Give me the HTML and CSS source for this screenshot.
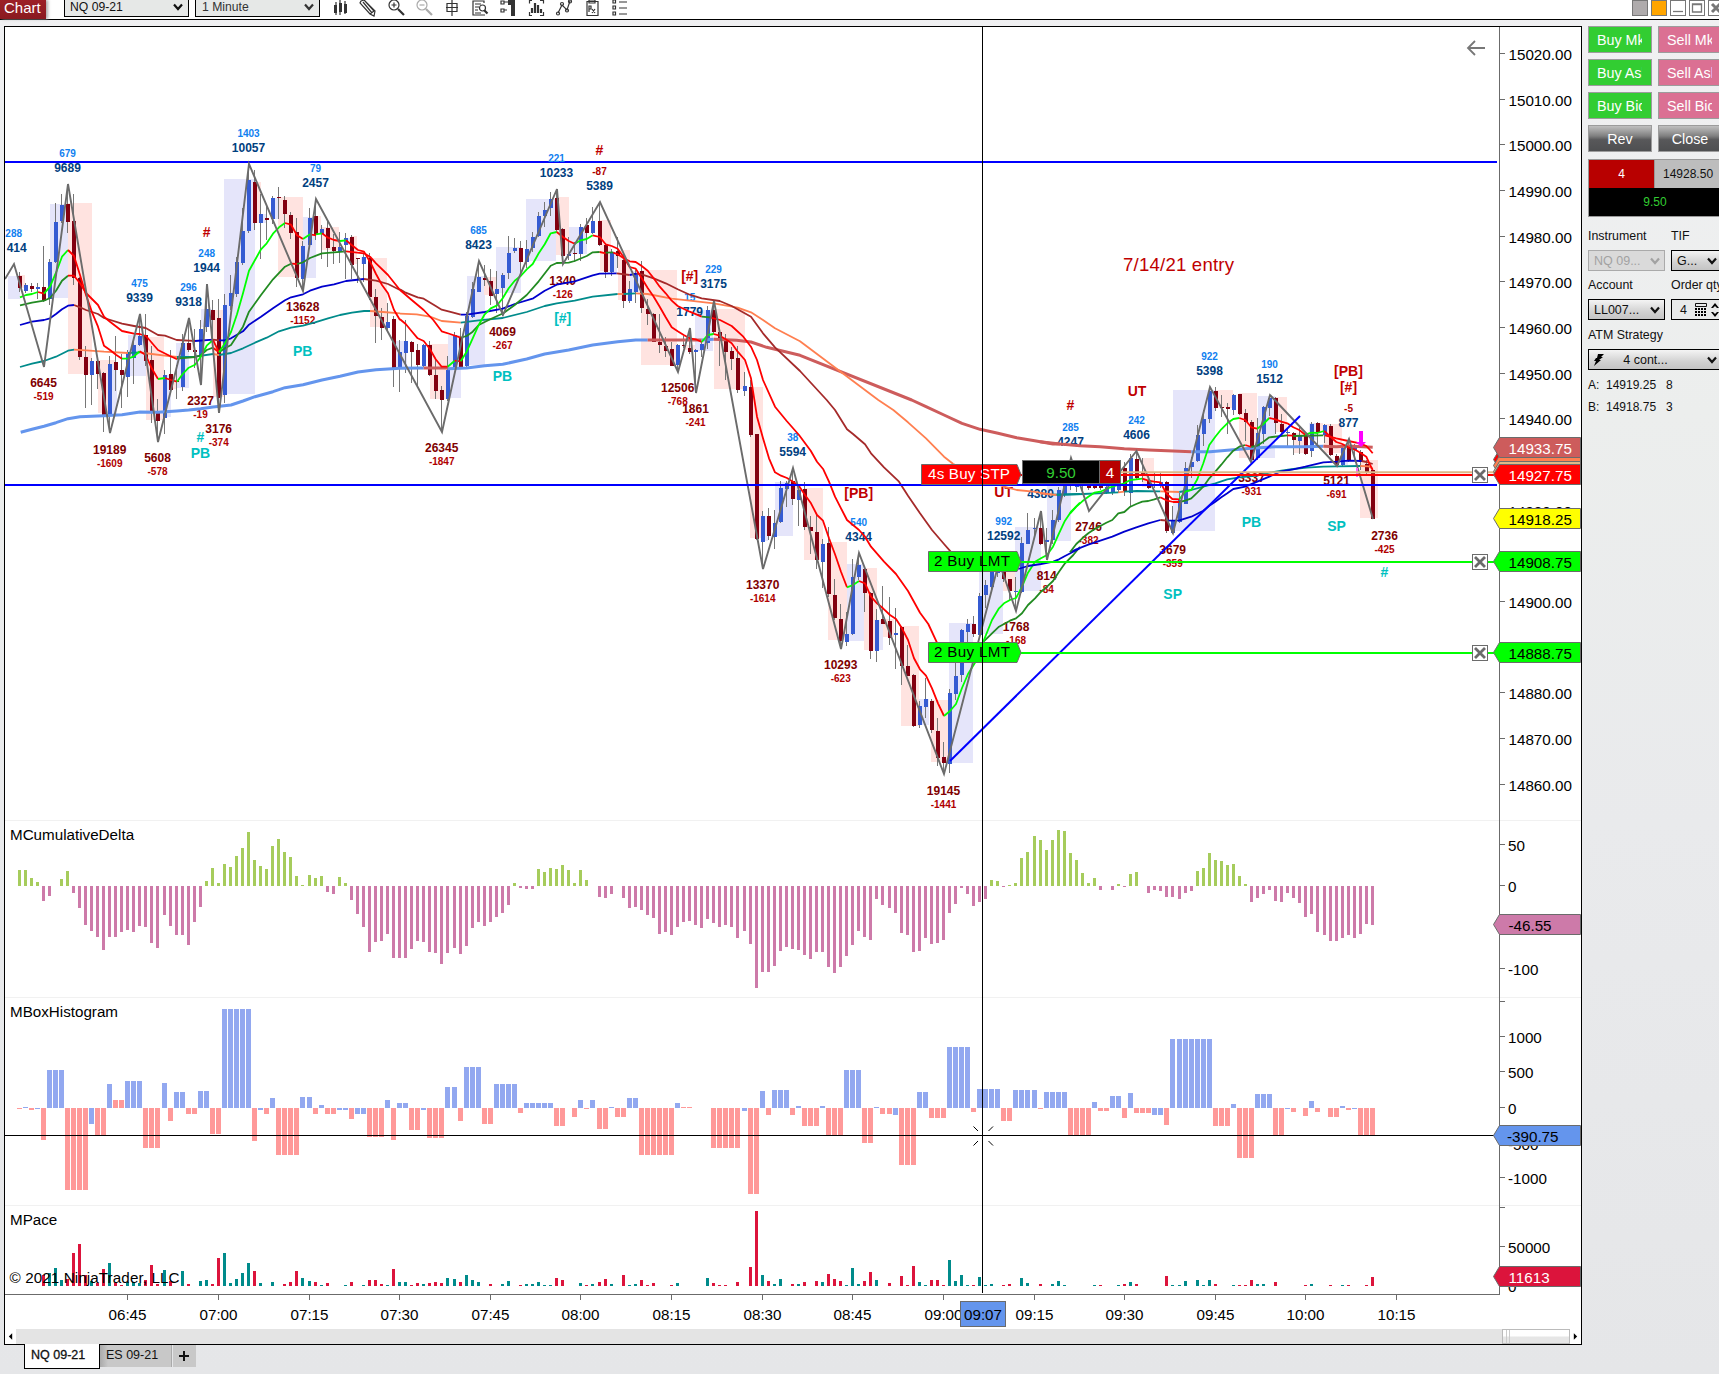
FILE: index.html
```html
<!DOCTYPE html>
<html lang="en">

<head>
  <meta charset="UTF-8" />
  <meta name="viewport" content="width=device-width, initial-scale=1.0" />
  <title>Chart - NQ 09-21</title>
  <link rel="stylesheet" href="styles.css">
</head>

<body>
  <div class="toolbar">
    <div class="app-name">Chart</div>
    <div class="picker"><span>NQ 09-21</span><svg class="chev" viewBox="0 0 10 8"><path d="M1 1.5l4 4.5 4-4.5" /></svg></div>
    <div class="picker minute"><span>1 Minute</span><svg class="chev" viewBox="0 0 10 8"><path d="M1 1.5l4 4.5 4-4.5" /></svg></div>
    <div class="tools">
      <svg viewBox="0 0 18 18"><path d="M5 2v13M9 0v15M14 1v13" /><path class="fill" d="M3 5h3v8H3zM8 3h3v9H8zM13 4h3v9h-3z" /></svg>
      <svg viewBox="0 0 18 18"><path d="M2 1l3-1 11 11-1 5-4-2L1 3zM4 2l9 11M6 1l9 10M11 14l4-3" /></svg>
      <svg viewBox="0 0 18 18"><circle cx="7" cy="5" r="5" /><path d="M4.500 5h5M7 2.500v5" /><path class="thick" d="M11 9l6 6" /></svg>
      <svg class="off" viewBox="0 0 18 18"><circle cx="7" cy="5" r="5" /><path d="M4.500 5h5" /><path class="thick" d="M11 9l6 6" /></svg>
      <svg viewBox="0 0 18 18"><path d="M9 0v16M3 7.500h12M4 3.500h10v8H4z" /></svg>
      <svg viewBox="0 0 18 18"><path d="M13 3V1H2v14h12M4 4h6M4 7h4M4 10h3M4 13h6" /><circle cx="11.500" cy="8" r="3" /><path class="thick" d="M13.500 10.500l3 3" /></svg>
      <svg viewBox="0 0 18 18"><path d="M2 1h3v3H2zM2 9h3v3H2zM5 2h5M5 10h3" /><path class="fill" d="M9 0h7v16h-4V5H9z" /></svg>
      <svg viewBox="0 0 18 18"><path d="M5 .5H2.500v3M13 .5h3.500v3M2.500 12v3.500H5M16.500 12v3.500H13" /><path class="thick" d="M5 13V8M8 13V3M11 13V5M14 13V9" /></svg>
      <svg viewBox="0 0 18 18"><path d="M3 13l4-8 5 5 3-9" /><circle cx="3" cy="13.500" r="1.500" /><circle cx="7" cy="4" r="1.500" /><circle cx="12" cy="10.500" r="1.500" /><circle cx="15" cy="1.500" r="1.500" /></svg>
      <svg viewBox="0 0 18 18"><path d="M4 1.500h11v14H4zM6 0h6v3H6zM6 12V6h2v3H6M9 9l3 4M12 9l-3 4" /></svg>
      <svg viewBox="0 0 18 18"><path d="M2 0h2.500v3H2zM2 6h2.500v3H2zM2 12h2.500v3H2zM8 2h8M8 8h8M8 14h8" /></svg>
    </div>
    <div class="window-buttons">
      <i class="gray"></i>
      <i class="orange"></i>
      <i><svg viewBox="0 0 14 14"><path d="M2 10.500h10" /></svg></i>
      <i><svg viewBox="0 0 14 14"><path d="M2.500 3h9v8h-9zM2.500 3.500h9" /></svg></i>
      <i><svg viewBox="0 0 14 14"><path class="cross" d="M3 3l8 8M11 3l-8 8" /></svg></i>
    </div>
  </div>

  <div class="main">
    <div class="chart">
      <svg id="plot" width="1576" height="1302" viewBox="5 27 1576 1302"></svg>
      <div class="scrollbar">
        <div class="arrow"><svg viewBox="0 0 6 8"><path d="M5 0v8L1 4z" /></svg></div>
        <div class="thumb"></div>
        <div class="arrow"><svg viewBox="0 0 6 8"><path d="M1 0v8l4-4z" /></svg></div>
      </div>
    </div>

    <div class="side">
      <div class="orders">
        <div class="btn buy"><span>Buy Mkt</span></div>
        <div class="btn sell"><span>Sell Mkt</span></div>
        <div class="btn buy"><span>Buy Ask</span></div>
        <div class="btn sell"><span>Sell Ask</span></div>
        <div class="btn buy"><span>Buy Bid</span></div>
        <div class="btn sell"><span>Sell Bid</span></div>
        <div class="btn dark">Rev</div>
        <div class="btn dark">Close</div>
      </div>
      <div class="position">
        <div class="qty">4</div>
        <div class="avg">14928.50</div>
        <div class="pnl">9.50</div>
      </div>
      <div class="fields">
        <label>Instrument</label>
        <label>TIF</label>
        <div class="select disabled"><span>NQ 09...</span><svg class="chev" viewBox="0 0 10 8"><path d="M1 1.500l4 4.500 4-4.500" /></svg></div>
        <div class="select"><span>G...</span><svg class="chev" viewBox="0 0 10 8"><path d="M1 1.500l4 4.500 4-4.500" /></svg></div>
        <label>Account</label>
        <label>Order qty</label>
        <div class="select"><span>LL007...</span><svg class="chev" viewBox="0 0 10 8"><path d="M1 1.500l4 4.500 4-4.500" /></svg></div>
        <div class="select qty-field">
          <span>4</span>
          <svg class="calc" viewBox="0 0 12 14"><path d="M.5.5h11v3H.5z" fill="none" stroke="#111" /><path d="M0 5h2v2H0zM3 5h2v2H3zM6 5h2v2H6zM9 5h2v2H9zM0 8h2v2H0zM3 8h2v2H3zM6 8h2v2H6zM9 8h2v2H9zM0 11h2v2H0zM3 11h2v2H3zM6 11h2v2H6zM9 11h2v2H9z" /></svg>
          <svg class="spin" viewBox="0 0 8 14"><path d="M0 5l4-5 4 5H6L4 3 2 5zM0 9l4 5 4-5H6l-2 2-2-2z" /></svg>
        </div>
        <label>ATM Strategy</label>
        <div class="select atm">
          <svg class="bolt" viewBox="0 0 10 12"><path d="M4 0h6L7 3h2L5 6h2L0 12l2-5H0l2-3h1z" /></svg>
          <span>4 cont...</span>
          <svg class="chev" viewBox="0 0 10 8"><path d="M1 1.500l4 4.500 4-4.500" /></svg>
        </div>
      </div>
      <div class="quotes">
        <span>A:</span><span>14919.25</span><span>8</span>
        <span>B:</span><span>14918.75</span><span>3</span>
      </div>
    </div>
  </div>

  <div class="tabs">
    <div class="tab active">NQ 09-21</div>
    <div class="tab">ES 09-21</div>
    <div class="tab plus"><svg viewBox="0 0 10 10"><path d="M5 0v10M0 5h10" /></svg></div>
  </div>

  <script src="chart.js"></script>
</body>

</html>
```
FILE: styles.css
```css
* {
  padding: 0;
  margin: 0;
  box-sizing: border-box;
}

body {
  width: 1719px;
  height: 1374px;
  overflow: hidden;
  background: linear-gradient(#f0f0f2, #eceeed 30%, #e9eaec 60%, #e5e6e8);
  font-family: "Liberation Sans", Arial, sans-serif;
  font-size: 12px;
  color: #111;
}

svg {
  display: block;
}

.toolbar {
  display: flex;
  align-items: flex-start;
  height: 20px;
  border-bottom: 1px solid #000;
  background: #fff;
}

.app-name {
  width: 46px;
  height: 19px;
  padding-left: 4px;
  background: linear-gradient(#9c2027, #8a1a20);
  box-shadow: 2px 0 3px #aaa;
  color: #fff;
  font-size: 15px;
  line-height: 15px;
}

.picker {
  display: flex;
  justify-content: space-between;
  align-items: center;
  width: 125px;
  height: 17px;
  margin-left: 18px;
  padding: 0 5px 2px;
  border: 1px solid #000;
  border-top: 0;
  background: #e6e8e7;
  font-size: 12.2px;
  line-height: 14px;
}

.picker.minute {
  margin-left: 6px;
  padding-left: 6px;
  color: #333;
}

.chev {
  width: 10px;
  height: 8px;
  fill: none;
  stroke: currentColor;
  stroke-width: 2.2;
}

.tools {
  display: flex;
  gap: 10px;
  margin-left: 11px;
}

.tools svg {
  width: 18px;
  height: 18px;
  fill: none;
  stroke: #333;
  stroke-width: 1.2;
}

.tools .fill {
  fill: #333;
  stroke: none;
}

.tools .thick {
  stroke-width: 2.2;
}

.tools .off {
  stroke: #aaa;
}

.picker,
.app-name {
  flex: none;
}

.window-buttons {
  display: flex;
  gap: 3px;
  margin-left: auto;
  margin-right: -5px;
}

.window-buttons i {
  flex: none;
  width: 16px;
  height: 16px;
  border: 1px solid #777;
  background: #fff;
}

.window-buttons .gray {
  background: #afabac;
}

.window-buttons .orange {
  background: #ffa500;
}

.window-buttons path {
  fill: none;
  stroke: #777;
  stroke-width: 1.3;
}

.window-buttons .cross {
  stroke-width: 3;
}

.main {
  display: flex;
  padding: 6px 0 0 4px;
}

.chart {
  flex: none;
  width: 1578px;
  height: 1319px;
  border: 1px solid #000;
  background: #fff;
}

.scrollbar {
  display: flex;
  height: 15px;
  background: #e4e4e4;
}

.scrollbar .arrow {
  display: flex;
  align-items: center;
  justify-content: center;
  width: 11px;
  background: #fff;
}

.scrollbar .arrow svg {
  width: 5px;
  height: 7px;
}

.scrollbar .thumb {
  width: 68px;
  margin-left: auto;
  border: 1px solid #bbb;
  background:
    linear-gradient(90deg, transparent 3px, #ccc 3px 4px, transparent 4px 6px, #ccc 6px 7px, transparent 7px),
    linear-gradient(#fff 45%, #e6e6e6 55%);
}

.side {
  flex: none;
  width: 137px;
  padding-left: 6px;
  overflow: hidden;
}

.orders {
  display: grid;
  grid-template-columns: 64px 64px;
  gap: 6px;
}

.btn {
  height: 27px;
  border: 1px solid #9c9c9c;
  color: #fff;
  font-size: 14.300px;
  line-height: 26px;
  text-align: center;
}

.btn span {
  display: block;
  width: 45px;
  margin-left: 8px;
  overflow: hidden;
  white-space: nowrap;
  text-align: left;
}

.buy {
  background: #32cd32;
}

.sell {
  background: #db7093;
}

.dark {
  background: linear-gradient(#c0c0c0, #808080 40%, #58585a 55%, #4e4f51);
}

.position {
  display: grid;
  grid-template-columns: 65px 70px;
  width: 136px;
  margin-top: 7px;
  border: 1px solid #999;
  line-height: 28px;
}

.qty {
  background: #b80000;
  color: #fff;
  text-align: center;
}

.avg {
  padding-left: 8px;
  border-left: 1px solid #999;
  background: #bdbdbd;
}

.pnl {
  grid-column: 1 / 3;
  height: 28px;
  padding-right: 3px;
  background: #000;
  color: #32cd32;
  text-align: center;
}

.fields {
  display: grid;
  grid-template-columns: 77px 70px;
  grid-template-rows: 21px 28px 21px 29px 21px 21px;
  column-gap: 6px;
  margin-top: 12px;
}

.fields label {
  line-height: 14px;
  font-size: 12.400px;
  white-space: nowrap;
}

.select {
  display: flex;
  align-items: center;
  justify-content: space-between;
  height: 21px;
  padding: 0 4px 0 5px;
  border: 1px solid #000;
  background: linear-gradient(#f4f4f4, #d2d2d2 60%, #c4c4c4);
  font-size: 12.500px;
}

.select:nth-child(4) {
  width: 51px;
}

.select.disabled {
  border-color: #aaa;
  background: #dadada;
  color: #a2a2a2;
}

.qty-field {
  justify-content: flex-start;
  padding-left: 8px;
  background: #e8eaea;
}

.calc {
  width: 12px;
  height: 14px;
  margin-left: 8px;
}

.spin {
  width: 8px;
  height: 14px;
  margin-left: 4px;
}

.fields .atm {
  grid-column: 1 / 3;
  grid-row: 6;
  width: 134px;
}

.bolt {
  width: 10px;
  height: 12px;
}

.atm span {
  margin-left: -20px;
}

.quotes {
  display: grid;
  grid-template-columns: 18px 60px 20px;
  margin-top: 4px;
  line-height: 22px;
}

.tabs {
  display: flex;
  height: 29px;
  margin-top: -1px;
  padding-left: 24px;
  font-size: 12.500px;
}

.tab {
  width: 72px;
  height: 22px;
  margin-top: 1px;
  padding-left: 6px;
  border-right: 1px solid #aaa;
  background: linear-gradient(90deg, #aaa, #c8c8c8 8px);
  line-height: 20px;
}

.tab.active {
  position: relative;
  width: 76px;
  height: 25px;
  margin-top: 0;
  padding-left: 6px;
  border: 1px solid #000;
  border-top: 0;
  background: #fff;
  line-height: 22px;
  -webkit-text-stroke: .3px #111;
}

.tab.plus {
  display: flex;
  align-items: center;
  justify-content: center;
  width: 23px;
  margin-left: 1px;
  padding: 0 2px 0 0;
  border: 0;
  background: #c8c8c8;
}

.plus svg {
  width: 10px;
  height: 10px;
  stroke: #111;
  stroke-width: 2;
}

/* plot */

#plot text {
  font-size: 15.2px;
}

#plot .ma {
  fill: none;
  stroke-width: 1.8;
  stroke-linejoin: round;
}

#plot .ma.slow {
  stroke-width: 3;
}

#plot .zigzag {
  fill: none;
  stroke: #6b6b6b;
  stroke-width: 1.9;
}

#plot .vol,
#plot .diff,
#plot .sig {
  font-weight: bold;
  text-anchor: middle;
}

#plot .vol {
  font-size: 12px;
}

#plot .diff {
  font-size: 10px;
}

#plot .sig {
  font-size: 14px;
}

#plot .note {
  font-size: 18.6px;
}

#plot .mid {
  text-anchor: middle;
}
```
FILE: chart.js
```js
const plot = document.querySelector('#plot')

// one bar is a bit over 6px wide
const barX = i => 19 + 6 * i + Math.floor(i / 24)

function el(name, attrs, text) {
  const node = document.createElementNS('http://www.w3.org/2000/svg', name)
  for (const key in attrs) node.setAttribute(key, attrs[key])
  if (text !== undefined) node.textContent = text
  plot.appendChild(node)
  return node
}
const rect = (x, y, width, height, fill, more) => el('rect', { x, y, width, height, fill, ...more })
const line = (x1, y1, x2, y2, stroke, w, more) => el('line', { x1, y1, x2, y2, stroke, 'stroke-width': w || 1, ...more })
const text = (x, y, str, more) => el('text', { x, y, ...more }, str)

// 1. panel dividers
for (const y of [820.5, 997.5, 1205.5]) line(5, y, 1581, y, '#f1f1f1')

// 2. cumulative delta
const delta = [16, 16, 8, 4, -15, -10, 0, 7, 15, -7, -22, -39, -45, -51, -64, -51, -51, -46, -44, -46, -40, -41, -57, -62,
  -29, -40, -49, -49, -59, -36, -21, 5, 18, 3, 22, 19, 30, 38, 54, 26, 20, 17, 40, 47, 34, 29, 10, 1,
  11, 8, 10, -6, -8, 9, 3, -14, -28, -41, -66, -56, -55, -48, -72, -72, -72, -63, -55, -56, -66, -67, -78, -67,
  -62, -68, -60, -42, -36, -40, -36, -31, -27, -19, 3, -2, -3, -3, 17, 14, 18, 17, 21, 16, 3, 16, 6, 0,
  -11, -12, -8, 0, -12, -22, -21, -24, -29, -32, -48, -46, -49, -41, -36, -35, -39, -42, -33, -37, -41, -39, -41, -52,
  -45, -58, -102, -86, -86, -80, -65, -61, -63, -64, -69, -73, -66, -66, -81, -87, -81, -70, -59, -45, -51, -54, -13, -19,
  -22, -27, -47, -49, -66, -65, -52, -58, -57, -54, -27, -18, -2, -8, -20, -16, -13, 6, 5, -1, 1, 3, 28, 34,
  50, 46, 36, 46, 56, 55, 33, 26, 13, 3, 8, -4, 0, -4, 2, -1, 12, 14, 0, -7, -4, -5, -11, -11,
  -13, -7, -5, 15, 18, 33, 26, 25, 21, 22, 10, 2, -16, -12, -8, -4, -15, -16, -7, -12, -17, -31, -28, -46,
  -49, -55, -55, -52, -49, -52, -48, -38, -39]
delta.forEach((v, i) => rect(barX(i) - 1, v > 0 ? 886 - v : 886, 3, Math.abs(v), v > 0 ? '#a6cc5c' : '#cd7aa9'))

// 3. box histogram: first bar, count, height, colour
const boxes = `0 1 -1 r,1 1 1 b,2 1 -2 r,3 1 -1 b,4 1 -32 r,5 3 38 b,8 4 -82 r,12 1 -16 b,13 2 -27 r,15 1 24 b,16 2 8 r,18 3 27 b,
21 3 -40 r,24 1 25 b,25 1 -13 r,26 2 16 b,28 2 -6 r,30 2 17 b,32 2 -26 r,34 5 99 b,39 1 -33 r,40 1 -2 b,41 1 -6 r,42 1 10 b,
43 4 -47 r,47 2 11 b,49 1 -6 r,50 1 3 b,51 2 -6 r,53 2 -2 b,55 1 -11 r,56 2 -6 b,58 3 -29 r,61 1 8 b,62 1 -32 r,63 2 5 b,
65 2 -22 r,67 1 -2 b,68 3 -30 r,71 2 21 b,73 1 -13 r,74 3 41 b,77 2 -16 r,79 4 24 b,83 1 -5 r,84 5 5 b,89 2 -18 r,92 1 -9 r,
93 1 8 b,94 1 -1 r,95 1 8 b,96 2 -21 r,98 1 1 b,99 2 -9 r,101 2 10 b,103 6 -47 r,109 1 5 b,110 2 1 r,115 5 -40 r,120 1 -3 b,
121 2 -86 r,123 1 17 b,124 1 -7 r,125 3 18 b,128 1 -7 r,129 1 2 b,130 3 -18 r,133 1 2 b,134 3 -27 r,137 3 38 b,140 2 -35 r,
142 1 1 b,143 2 -6 r,145 1 -7 b,146 3 -57 r,149 2 16 b,151 3 -10 r,154 4 61 b,158 1 -4 r,159 4 19 b,163 2 -13 r,165 4 18 b,
169 1 -1 r,170 4 16 b,174 4 -27 r,178 1 6 b,179 2 -3 r,181 2 12 b,183 1 -10 r,184 1 15 b,185 3 -5 r,188 2 -7 b,190 1 -17 r,
191 7 69 b,198 3 -18 r,201 1 4 b,202 3 -50 r,205 3 14 b,208 2 -27 r,210 1 -1 b,211 1 -4 r,213 1 -8 r,214 1 7 b,215 1 -4 r,
217 2 -9 r,219 1 2 b,220 1 -2 r,221 1 -1 b,222 3 -27 r`
boxes.split(',').forEach(item => {
  const [start, count, v, c] = item.trim().split(' ')
  for (let i = +start; i < +start + +count; i++) {
    rect(barX(i) - 2, v > 0 ? 1108 - v : 1108, 5, Math.abs(v), c === 'b' ? '#92a8f0' : '#ff9999')
  }
})

// 4. pace
const pace = `4r11 5t13 6t18 7t6 8r7 9r33 10r42 11r11 12t5 13r3 14r17 15t23 16r3 17r1 18t4 19t4 20t3 21r6 22r21 23r2 24t16 25r5 27t15 28r2
30t5 31t6 32r2 33r28 34t33 35t3 36t7 37t13 38t23 39r15 40t3 42t4 44r2 45r4 46r15 47t8 48t5 49r4 50t1 51r3 54t1 55r4 57t1 58r6 59r6
60r2 61t1 62r17 63t4 64t4 65r1 66r3 67t2 68r3 69r4 70r3 71t8 72t7 73r4 74t11 75t6 76t4 78r2 80t2 81t5 83r1 84t2 85t2 86t4 87t1 88t1
89r8 90r6 93t3 94r1 95t2 96r4 97r7 98t2 100r11 101t1 102t2 103r6 104r1 105r3 108r1 109t3 114t8 115r3 116r1 117r1 119r4 121r19 122r75
123t11 124r5 125t2 126t7 128r2 129t2 130r4 132r5 133t4 134r12 135r7 136r5 137t1 138t18 139t2 140r5 141r14 142t6 144r3 146r10 147r1
148r20 149t4 150t1 151r6 152r6 153r1 154t26 155t5 156t11 157t1 158r1 159t9 160t1 161t2 163r1 164r2 166t8 167t3 169r2 171t2 172t5
173t1 178t1 179r1 182t1 183r2 184t4 185r2 190r10 191t1 192t1 193t5 195t6 196t1 197t6 198r2 201t1 202r1 203r1 204r6 205t2 206t2 208r4
213r1 214t2 217r1 219t1 220r1 223r1 224r9`
for (const [, i, c, h] of pace.matchAll(/(\d+)([rt])(\d+)/g)) {
  rect(barX(+i) - 1, 1286 - h, 3, h, c === 'r' ? '#dc143c' : '#008b8b')
}

// 5. swing boxes: x1 y1 x2 y2, lavender for up and pink for down
const swings = `b 8 276 20 299,r 20 275 25 288,b 50 204 68 298,r 68 203 92 374,r 98 360 116 413,b 110 364 117 415,b 128 335 146 376,
r 146 337 164 420,b 164 375 171 417,r 170 374 176 389,b 176 343 189 388,r 189 343 195 350,b 201 309 213 327,r 213 310 224 397,
b 224 179 255 394,r 255 182 261 223,b 261 214 266 223,b 271 198 278 219,r 278 197 303 277,b 303 217 316 278,r 316 216 321 235,
r 322 227 339 250,b 345 238 350 245,r 351 236 357 264,b 361 257 366 264,r 370 258 387 327,b 395 341 407 367,r 430 344 448 399,
b 448 335 461 398,b 467 276 485 365,r 484 277 497 295,b 496 247 521 293,b 526 199 556 261,r 556 197 569 255,b 569 227 587 254,
r 600 220 611 271,b 611 252 617 272,r 618 250 630 300,b 630 271 641 292,r 641 270 677 365,r 683 345 695 350,b 695 310 713 351,
r 714 309 745 389,r 750 387 763 538,b 763 516 768 541,b 775 482 793 536,r 793 481 798 499,r 804 488 823 560,r 828 542 847 640,
b 847 564 864 641,r 864 568 877 650,b 877 620 883 650,r 883 619 894 637,r 901 626 919 726,b 919 699 929 725,r 931 700 948 762,
b 949 623 973 763,b 979 567 1003 634,r 1003 570 1015 591,b 1015 527 1041 591,b 1047 485 1071 541,r 1142 458 1154 487,
b 1173 390 1215 531,r 1215 390 1233 408,r 1239 393 1257 458,b 1258 396 1275 458,r 1275 397 1287 432,r 1293 433 1306 453,
b 1309 423 1318 440,r 1318 423 1323 432,r 1324 424 1342 453,b 1342 446 1348 465,r 1360 460 1378 518`
swings.split(',').forEach(item => {
  const [c, x1, y1, x2, y2] = item.trim().split(' ')
  rect(+x1, +y1, x2 - x1, y2 - y1, c === 'b' ? '#e5e5fa' : '#ffe3e0')
})

// 6. horizontal levels
line(5, 162, 1497, 162, '#0000ff', 2)

// 7. candles: colour high top bottom low
const candles = `r272 276 288 292,b283 285 291 293,r283 286 289 292,b283 287 289 299,r246 287 301 302,b259 262 299 305,b203 222 262 263,
b194 205 221 223,r184 204 222 233,r194 221 278 285,r277 278 357 360,r346 357 375 408,b358 361 375 405,r356 361 374 389,r372 373 416 432,
b356 364 415 433,r336 362 370 391,r354 370 375 408,b350 353 377 397,b342 345 358 384,b314 336 345 346,r314 335 361 366,r346 360 411 423,
r399 413 421 441,b370 375 418 434,r350 374 390 394,r365 381 382 399,b334 343 387 391,r318 343 350 352,r329 350 352 368,b320 329 355 385,
b284 309 327 332,r300 310 320 338,r299 318 398 413,b294 305 395 403,b275 293 306 310,b257 262 294 297,b208 231 263 265,b164 180 231 233,
r170 182 223 230,b194 214 223 259,r206 218 220 240,b196 198 219 224,r187 197 198 219,r196 200 214 228,r212 215 233 239,r218 232 278 287,
b241 246 279 291,b208 218 245 247,r199 216 235 240,b225 229 234 259,r221 228 248 267,r234 247 251 264,b232 247 252 263,b233 238 245 279,
r235 237 265 279,r258 258 259 283,b254 257 264 282,r253 258 297 300,r289 297 316 343,r308 317 328 340,b303 322 328 331,r316 319 368 387,
b340 352 368 392,b320 341 353 373,r341 342 352 383,r344 350 365 387,b344 345 366 367,r341 345 375 376,r360 375 391 399,r386 390 400 432,
b356 370 399 401,b332 335 367 368,r328 337 367 368,b312 316 366 367,b282 289 317 318,b261 277 292 292,r265 278 280 286,r269 281 296 305,
b271 289 294 313,b273 275 288 316,b236 253 273 279,b238 248 251 253,r241 248 262 274,b240 249 262 268,b232 237 248 252,b212 216 236 237,
b202 210 216 227,b192 199 208 216,r189 198 230 232,r228 229 256 264,b237 254 256 260,r242 253 254 262,b224 227 254 261,r218 225 233 244,
b207 221 233 234,r202 221 245 246,r244 245 272 278,b249 252 272 276,r237 251 256 268,r253 260 301 308,b281 289 301 303,b270 273 292 303,
r261 271 308 313,r299 309 314 325,r313 314 342 342,r314 342 345 353,r337 346 351 357,r342 349 366 366,b344 345 365 372,r336 345 346 348,
r328 348 352 354,b349 350 352 393,b341 344 350 357,b306 310 343 349,r301 310 332 334,r331 332 340 366,r334 339 352 380,r347 351 359 370,
r346 358 390 393,b372 386 391 396,r380 387 435 437,r434 434 539 540,b511 516 542 569,r508 516 536 540,b510 523 537 549,b481 488 522 523,
b481 483 489 507,r468 481 499 505,b484 490 500 526,r482 489 527 530,r516 527 531 554,r515 532 560 569,b539 544 562 588,r527 543 594 597,
r579 595 618 620,r604 619 641 649,b612 634 642 646,b559 577 634 635,b553 565 577 580,r568 569 593 612,r592 593 651 659,b609 620 651 662,
r586 619 624 624,r597 621 638 645,b608 633 635 669,r626 627 666 685,r645 666 676 676,r674 675 726 727,b701 706 725 728,b678 699 707 718,
r699 701 730 733,r718 731 758 766,r742 757 763 774,b689 693 764 773,b660 676 694 700,b629 630 675 682,b619 624 632 644,r616 624 634 637,
b593 596 635 635,b580 585 595 608,b567 570 587 592,b566 568 573 577,r565 567 579 582,r579 579 591 600,b577 591 592 611,b537 543 592 593,
b513 530 544 544,b518 528 529 536,r511 528 544 545,b528 540 542 560,b510 520 540 544,b487 490 520 522,b470 475 495 497,r458 480 485 490,
b478 484 487 492,r480 484 486 490,r480 485 488 490,r483 485 488 489,r483 485 488 490,b484 487 492 494,b480 483 493 495,b478 482 490 493,
r462 468 492 496,b454 458 493 507,r451 459 478 479,r458 473 474 482,r475 480 488 489,b473 485 486 488,b473 482 486 488,r481 482 531 533,
b506 520 533 534,b493 500 522 523,b462 468 504 504,b457 462 467 478,b425 435 461 462,b410 419 434 446,b387 391 419 423,r387 391 408 411,
r395 407 408 417,r403 407 409 434,b394 395 410 415,r394 394 414 415,r409 413 422 441,r420 422 460 462,b418 433 458 460,b406 407 434 444,
b395 398 408 416,r397 398 423 434,r414 424 432 437,b428 432 433 448,r432 433 440 455,b426 436 441 454,r434 435 454 455,b422 424 451 457,
r422 423 432 444,b424 425 435 443,r424 426 455 456,r454 456 465 466,b444 448 465 466,r439 445 460 462,b444 446 450 460,r450 452 462 470,
r460 464 473 475,r468 470 519 519`
candles.split(',').forEach((item, i) => {
  item = item.trim()
  const [high, top, bottom, low] = item.slice(1).split(' ').map(Number)
  const x = barX(i)
  line(x + .5, high, x + .5, low, '#777')
  rect(x - 1, top, 4, Math.max(1, bottom - top), item[0] === 'b' ? '#355bd2' : '#820010')
})

// 8. swing labels: x baseline text
const blue = '#004080', sky = '#1080f0', maroon = '#800000', red = '#b00000', cyan = '#00c0c0'
const label = (cls, fill, list) => list.split(',').forEach(item => {
  const [x, y, str] = item.trim().split(' ')
  text(x, y, str, { class: cls, fill })
})
label('vol', blue, `67.5 172 9689,16.7 252 414,139.5 302 9339,188.5 306 9318,206.700 272 1944,248.5 152 10057,315.5 187 2457,478.5 249 8423,
556.5 177 10233,599.5 190 5389,713.5 288 3175,689.700 316 1779,792.700 456 5594,858.700 541 4344,1003.700 540 12592,1040.5 498 4380,
1070.5 446 4247,1136.5 439 4606,1209.5 375 5398,1269.5 383 1512,1348.5 427 877`)
label('diff', sky, `67.5 157 679,13.700 237 288,139.5 287 475,188.5 291 296,206.700 257 248,248.5 137 1403,315.5 172 79,478.5 234 685,
556.5 162 221,713.5 273 229,689.700 301 15,792.700 441 38,858.700 526 540,1003.700 525 992,1070.5 431 285,1136.5 424 242,1209.5 360 922,
1269.5 368 190`)
label('vol', maroon, `43.5 387 6645,109.700 454 19189,157.5 462 5608,200.5 405 2327,218.700 433 3176,302.700 311 13628,441.700 452 26345,
502.5 336 4069,562.700 285 1340,677.700 392 12506,695.5 413 1861,762.700 589 13370,840.700 669 10293,943.5 795 19145,1016 631 1768,
1046.700 580 814,1088.5 531 2746,1172.700 554 3679,1251.5 482 3337,1336.5 485 5121,1384.5 540 2736`)
label('diff', red, `43.5 400 -519,109.700 467 -1609,157.5 475 -578,200.5 418 -19,218.700 446 -374,302.700 324 -1152,441.700 465 -1847,
502.5 349 -267,562.700 298 -126,599.5 175 -87,677.700 405 -768,695.5 426 -241,762.700 602 -1614,840.700 682 -623,943.5 808 -1441,
1016 644 -168,1046.700 593 -84,1088.5 544 -382,1172.700 567 -359,1251.5 495 -931,1336.5 498 -691,1348.5 412 -5,1384.5 553 -425`)
label('sig', '#c00000', `206.700 237 #,599.5 155 #,689.700 281 [#],858.700 498 [PB],1003.700 497 UT,1070.5 410 #,1137 396 UT,1348.5 376 [PB],1348.5 392 [#]`)
label('sig', cyan, `200.5 442 #,200.5 458 PB,302.700 356 PB,502.5 381 PB,562.700 323 [#],1172.700 599 SP,1251.5 527 PB,1336.5 531 SP,1384.5 577 #`)
text(1123, 270.500, '7/14/21 entry', { fill: '#c00000', class: 'note', textLength: 111 })

// 9. moving averages, points on a 1/3px grid from the origin of each tile
const colors = { lime: '#00ff00', red: '#ff0000', green: '#228b22', blue: '#0000cd', brown: '#a52a2a', teal: '#008b8b', coral: '#ff7f50', corn: '#6495ed', rose: '#cd5c5c' }
const averages = [
  [0, 120, `corn 62,937 96,928 132,919 168,908 204,896 240,890 312,887 366,884 420,876 474,877 530,873 566,870 602,866 639,861 693,855 729,843 765,830 819,815 855,803 909,794 966,780 1020,769 1074,756 1128,749 1200,745
teal 60,741 96,731 132,723 168,710 204,692 222,689
coral 222,689 258,691 312,695 384,699
teal 384,699 420,697
coral 420,697 455,702 495,707 531,711
teal 531,711 585,710 639,702
coral 639,702 657,705
teal 657,705 693,699 729,685 765,668 800,653 837,634 873,623 909,617 945,607 984,595 1020,585 1056,578 1092,573 1110,573
coral 1110,573 1150,576 1200,580
blue 60,615 96,605 132,600 150,595 168,582 186,568 204,557 222,555
brown 222,555 240,562 258,570 294,582 312,594 366,611 402,618 437,624 474,645 495,647 530,660 566,662 585,663
blue 585,663 639,659
brown 639,659 657,661
blue 657,661 675,661 693,655 729,634 747,614 783,590 819,565 855,541 873,532 909,523 930,512 966,500 1002,493 1038,483 1092,477
brown 1092,477 1128,482 1164,492 1200,510
green 60,556 96,548 132,542 150,534 168,512 186,482 204,467
red 204,467 222,467 240,490 258,519 294,555 312,590 330,605 366,633 402,641 419,642 438,648 474,690 510,708 531,718
green 531,716 566,713 585,711 602,706 620,690 639,683
red 639,683 657,697
green 657,697 675,685 693,675 729,620 747,575 783,525 819,478 855,440 873,431
red 873,431 891,432
green 891,432 909,427 930,414 966,400 1002,397 1038,394
red 1038,394 1092,400 1110,410 1128,430 1164,465 1200,510
lime 60,532 78,525 96,522 114,516
red 114,516 132,521
lime 132,521 150,500 168,458 186,410 204,390
red 204,390 222,408 240,465 258,525 276,577 294,620 312,677 330,690 348,704 366,716
lime 366,716 384,716 402,709 419,694
red 419,694 437,705 455,745 474,777
lime 474,777 495,774
red 495,774 513,780 531,785
lime 531,785 548,762 566,743 585,734 602,710 620,677 639,660
red 639,660 657,697
lime 657,697 675,670 693,636 711,583 729,520 747,452 765,420 783,388 800,370 819,341 837,322 855,309
red 855,309 873,314 891,346 909,357
lime 909,357 930,343
red 930,343 948,346
lime 948,343 966,340
red 966,340 984,353 1002,360 1020,363
lime 1020,363 1038,361
red 1038,361 1056,376 1074,390 1092,395 1110,425 1128,462 1146,495 1164,520 1182,570 1200,600`],
  [400, 120, `corn 0,745 71,744
rose 71,744 143,744
corn 143,746 200,744 254,737 308,733 380,717 434,702 506,690 578,675 653,665 707,660 743,660
rose 743,660 905,660
corn 905,660 941,658
rose 941,658 1010,661 1053,666 1100,682 1200,706 1535,840 1578,860 1632,885 1686,910 1740,928 1794,940 1850,953 1904,962 1959,972 1980,972
coral 0,581 50,583 90,590 125,603 182,608
teal 182,608 236,601 308,594 380,576 434,558 470,550 524,542 578,530 653,522
coral 653,522 671,522
teal 671,522 707,520
coral 707,520 743,522 815,536 869,542 941,550 1013,563 1053,577 1089,600 1125,625 1200,664 1435,840 1480,870 1524,907 1578,955 1632,1010 1660,1032
brown 0,508 17,518 53,532 71,536 107,558 125,569 160,578 182,584
blue 182,584 200,584 254,576 308,566 344,552 400,535 434,512 470,494 524,484 578,466 599,461 650,460
brown 650,460 689,465
blue 689,465 710,461
brown 710,461 725,463 761,475 797,490 833,508 869,524 905,535 959,543 995,558 1053,590 1089,640 1125,682 1200,753 1280,840 1305,870 1341,928 1359,942 1395,973 1413,1000 1452,1042 1497,1085 1524,1127 1560,1180 1596,1230 1632,1272 1652,1295
red 0,510 35,540 71,570 100,600 125,634 150,642 182,653
green 182,653 200,648 218,635 236,615 272,597 310,580 344,555 380,525 416,484 452,437 470,429 506,428 524,423 560,408 578,397 599,396
red 599,396 617,400
green 617,398 640,397
red 640,398 653,403 671,415 689,424 707,426 725,438 743,452 761,475 779,500 797,520 815,542 833,558 869,575 905,590
green 905,590 930,592
red 930,592 960,600 995,618 1030,650 1053,680 1071,720 1089,780 1125,860 1160,903 1197,945 1232,992 1251,1025 1270,1048 1287,1085 1305,1130 1323,1165 1341,1200 1359,1215 1377,1230 1395,1250 1413,1280 1452,1325 1488,1362 1524,1413 1560,1478 1585,1512 1612,1570
red 0,598 17,612 35,634 53,655 71,663 89,686 107,718 125,740 143,740
lime 143,740 164,722
red 164,722 182,724
lime 182,724 200,695 218,655 236,615 254,583 272,565 290,557 308,535 326,505 344,482 362,468 380,448 398,432 416,400 434,373 452,340 470,336
red 470,336 488,350 506,363 524,371
lime 524,371 542,361 560,357 578,346
red 578,346 599,351 617,373 635,378 653,386 671,412 689,441 707,446 725,475 743,504 761,530 779,560 797,592 815,622 833,634 851,645 869,655 887,658 905,666
lime 905,666 923,645 941,642
red 941,642 959,647 977,658 995,670 1013,695 1035,720 1053,775 1071,890 1089,955 1107,1015 1125,1057 1143,1067 1161,1074 1179,1085 1197,1098 1215,1125 1233,1150 1251,1185 1269,1202 1287,1255 1305,1303 1323,1355 1341,1402`],
  [680, 400, `lime 501,562 519,555 537,543
red 537,543 555,550 573,590 591,610 609,625 630,645 648,657 666,685 684,720 702,775 720,808 738,827 756,865 774,910 792,948
green 905,730 936,700 957,680 990,662 1008,655 1026,640 1044,615 1065,595 1083,575 1101,560 1119,543 1137,515 1155,490 1180,465 1200,440
lime 792,948 810,933 828,912 846,864 864,822 884,790 910,725 936,660 957,625 972,610 990,600 1008,594 1026,560 1044,518 1065,485 1083,475 1101,465 1119,440 1137,400 1155,362 1173,335 1200,308
blue 1015,507 1044,498 1083,492 1120,485 1137,478 1155,468 1200,445
coral 820,192 900,230 972,260 1010,270 1060,275 1115,284
teal 1115,284 1200,282`],
  [1040, 340, `rose 0,305 60,312 120,317 180,320 253,326 325,330 400,333 454,335
corn 454,335 510,335 580,329 634,325 706,320 800,320 850,319
rose 850,319 889,320 925,318 998,322
coral 0,460 20,462 50,465
teal 50,465 130,462 235,457
coral 235,457 253,455
teal 253,455 290,453 361,454
coral 361,454 418,456
teal 418,456 454,450 490,440 526,430 562,418 598,412 652,407 688,398 724,392 760,387 800,383 850,380 892,379 961,378
coral 961,378 985,379 998,386
blue 90,637 109,628 145,614 181,602 217,590 253,575 289,562 325,550 361,540
brown 361,540 382,542
blue 382,542 418,541 454,530 490,512 508,497 526,485 544,472 562,460 580,447 616,440 652,425 688,410 724,394 760,388 796,380 850,367 892,365 925,362 965,363
brown 965,363 980,366 998,372
green 90,637 109,612 127,595 145,580 163,568 181,558 199,548 217,540 235,520 253,516 271,500 289,492 307,485 325,483 343,478 361,472
red 361,472 379,481 400,486 418,486
green 418,486 436,482 454,475 472,458 490,440 508,415 526,395 544,374 562,352 580,332 598,320 616,315
red 616,315 634,321
green 634,321 652,317 670,305 688,292 724,288 742,286
red 742,286 760,287
green 760,288 850,286
red 855,286 889,295 925,303 960,310 979,318 990,330 998,340
lime 90,521 109,500 127,484 145,470 163,458 181,455 199,447 217,440 235,435 253,430 271,420 289,418 307,416
red 307,416 325,422 343,425 361,427 379,460 397,477 418,478
lime 418,478 436,455 454,450 472,418 490,370 508,315 526,290 544,268 562,250 580,237 598,234
red 598,234 616,240 634,262 652,266
lime 652,266 670,252 688,234
red 688,234 706,238 724,245 742,250 760,262 778,270 796,284
lime 796,284 814,278 832,279 853,273
red 853,273 871,290 889,306 907,312 925,322 943,328 961,338 979,350 988,370 998,390`]
]
averages.forEach(([ox, oy, rows]) => rows.split('\n').forEach(row => {
  const [name, ...pts] = row.split(' ')
  const points = pts.map(p => {
    const [x, y] = p.split(',')
    return (ox + x / 3).toFixed(1) + ',' + (oy + y / 3).toFixed(1)
  }).join(' ')
  el('polyline', { points, stroke: colors[name], class: name === 'corn' || name === 'rose' ? 'ma slow' : 'ma' })
}))

// 10. zigzag and drawn lines
el('polyline', {
  class: 'zigzag',
  points: `5,279 14,264 44,367 68,184 110,433 140,314 158,442 189,318 201,385 207,284 219,413 249,164 303,291 316,199 442,432 479,261
503,315 557,189 563,264 600,202 678,372 690,328 696,393 714,301 763,569 793,468 841,649 859,553 944,774 999,562 1016,611 1041,511
1047,560 1071,458 1089,511 1136.500,451 1173,533 1210,387 1251,462 1270,395 1337,466 1349,439 1373,519`
})
line(950, 761, 1300, 416, '#0000ff', 2)
line(5, 485, 1497, 485, '#0000ff', 2)
el('path', { d: 'M1359 431h4v11h3l-5 5-5-5h3z', fill: '#ff00ff' })
rect(1356, 468, 2, 9, '#ff66ff')

// 11. working orders
line(1120, 472.3, 1494, 472.3, '#deb887', 2)
line(1020, 475, 1494, 475, '#ff0000', 2)
line(1021, 562, 1494, 562, '#00ff00', 2)
line(1021, 653, 1494, 653, '#00ff00', 2)
const order = (x, y, fill, color, str, tx) => {
  el('path', { d: `M${x} ${y}H1017l4 10-4 10H${x}z`, fill, stroke: '#6b6b6b' })
  text(tx, y + 14.500, str, { fill: color, textLength: 1010 - tx })
}
order(921.5, 464.5, '#ff0000', '#fff', '4s Buy STP', 928)
order(928.5, 551.5, '#00ff00', '#000', '2 Buy LMT', 934)
order(928.5, 642.5, '#00ff00', '#000', '2 Buy LMT', 934)
rect(1022.5, 460.5, 77, 23, '#000', { stroke: '#6b6b6b' })
rect(1099.5, 460.5, 21, 23, '#b80000', { stroke: '#6b6b6b' })
text(1061, 477.5, '9.50', { fill: '#32cd32', class: 'mid' })
text(1110, 477.5, '4', { fill: '#fff', class: 'mid' })
for (const y of [467, 554, 645]) {
  rect(1472.5, y + .5, 15, 15, '#fff', { stroke: '#6b6b6b' })
  el('path', { d: `M1475 ${y + 3}l10 10m0-10l-10 10`, stroke: '#6b6b6b', 'stroke-width': 2.800 })
}

// 12. axes
line(1499.5, 27, 1499.5, 1295, '#6b6b6b')
line(5, 1294.5, 1500, 1294.5, '#6b6b6b')
for (let p = 15020; p >= 14860; p -= 10) {
  const y = Math.round(53 + (15020 - p) * 4.567)
  line(1500, y + .5, 1505, y + .5, '#6b6b6b')
  text(1508.500, y + 6.500, p + '.00')
}
const ticks = [[844, '50'], [885, '0'], [968, '-100'], [1001, ''], [1036, '1000'], [1071, '500'], [1107, '0'], [1143, '-500'], [1177, '-1000'], [1207, ''], [1246, '50000'], [1285, '0']]
ticks.forEach(([y, str]) => {
  line(1500, y + .5, 1505, y + .5, '#6b6b6b')
  text(1508, y + 6.500, str)
})
for (let k = 0; k < 15; k++) {
  const x = barX(18 + 15 * k) + .5
  const h = (6 + Math.floor((45 + k * 15) / 60)).toString().padStart(2, '0')
  const m = ((45 + k * 15) % 60).toString().padStart(2, '0')
  line(x, 1295, x, 1300, '#6b6b6b')
  text(x, 1320, h + ':' + m, { class: 'mid' })
}

// 13. panel titles
text(10, 840, 'MCumulativeDelta')
text(10, 1017, 'MBoxHistogram')
text(10, 1225, 'MPace')
text(9.500, 1283, '© 2021 NinjaTrader, LLC', { textLength: 170 })

// 14. price markers
const tag = (y, fill, str, color, tx) => {
  el('path', { d: `M1493.500 ${y}l6-10H1580.500v20H1499.500z`, fill, stroke: '#6b6b6b' })
  if (str) text(tx || 1508.500, y + 6, str, { fill: color || '#000' })
}
tag(459.5, '#ff0000')
tag(465.5, '#ff7f50')
tag(471.5, '#deb887')
tag(447.5, '#cd5c5c', '14933.75', '#fff')
tag(474.5, '#ff0000', '14927.75', '#fff')
tag(518.5, '#ffff00', '14918.25')
tag(561.5, '#00ff00', '14908.75')
tag(652.5, '#00ff00', '14888.75')
tag(924.5, '#cd7aa9', '-46.55')
tag(1276.5, '#dc143c', '11613', '#fff')

// 15. crosshair
line(982.5, 27, 982.5, 1293, '#000')
line(5, 1135.5, 1494, 1135.5, '#000')
el('path', { d: 'M973.500 1126.500l4.500 4.500M993 1126.500l-4.500 4.500M973.500 1145.500l4.500-4.500M993 1145.500l-4.500-4.500', stroke: '#000' })
tag(1135.5, '#6495ed', '-390.75', '#000', 1507)
rect(960.5, 1301.5, 45, 25, '#6495ed', { stroke: '#6b6b6b' })
text(983, 1320, '09:07', { class: 'mid' })
el('path', { d: 'M1485 48h-17m7-7l-7 7 7 7', fill: 'none', stroke: '#777', 'stroke-width': 1.8 })
```
